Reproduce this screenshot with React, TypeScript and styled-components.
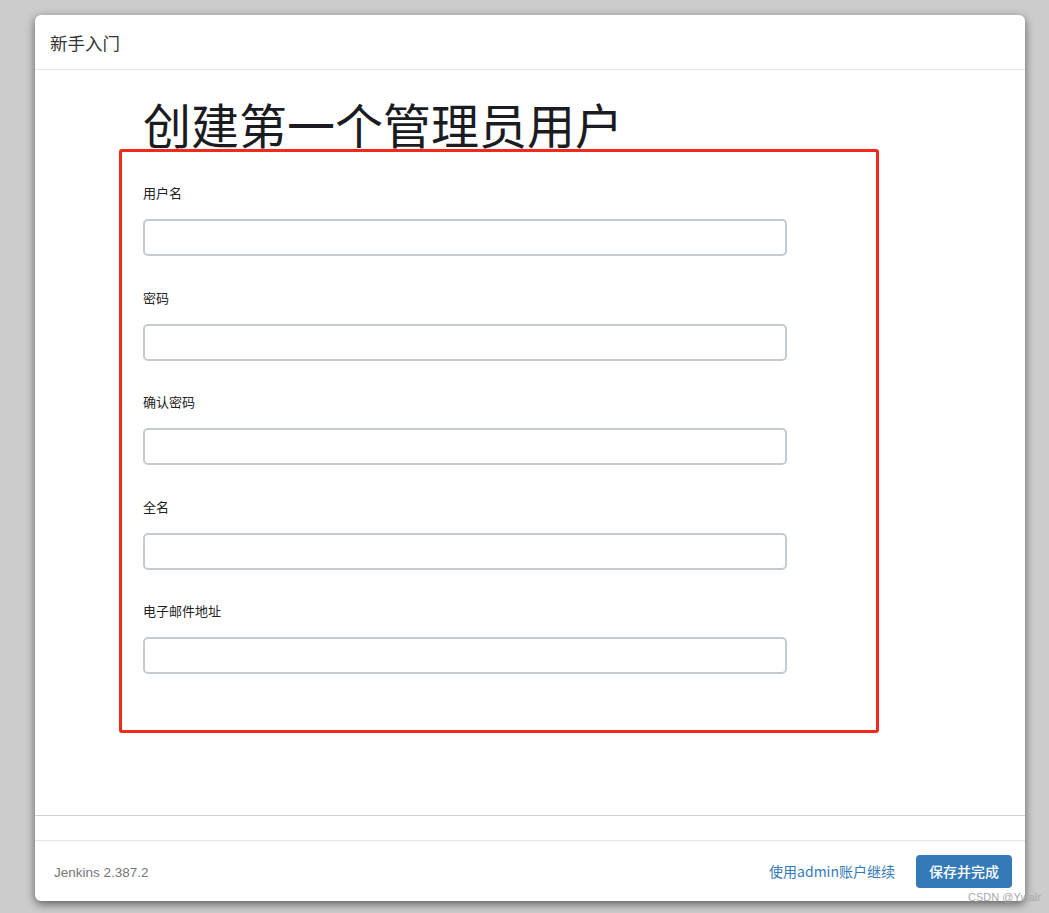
import React from "react";
import styled, { createGlobalStyle } from "styled-components";

const Global = createGlobalStyle`
  html, body { margin: 0; padding: 0; background: #cccccc; }
  body {
    font-family: "Liberation Sans", "Noto Sans CJK SC", sans-serif;
    color: #333;
  }
  * { box-sizing: border-box; }
`;

const Page = styled.div`
  position: relative;
  width: 1049px;
  height: 913px;
  padding: 15px 24px 12px 35px;
`;

const Modal = styled.div`
  width: 990px;
  height: 886px;
  background: #fff;
  border-radius: 6px;
  box-shadow: 0 3px 10px rgba(0, 0, 0, 0.55);
  display: flex;
  flex-direction: column;
  overflow: hidden;
`;

const Header = styled.div`
  height: 55px;
  flex-shrink: 0;
  border-bottom: 1px solid #e5e5e5;
  display: flex;
  align-items: center;
  padding: 0 15px;
  font-family: "Noto Sans CJK SC", sans-serif;
  font-size: 17.5px;
  color: #333;
`;

const Body = styled.div`
  flex: 1;
  border-bottom: 1px solid #d0d0d0;
  padding-top: 24px;
`;

const Title = styled.h1`
  margin: 0 0 0 108px;
  font-family: "Noto Sans CJK SC", sans-serif;
  font-weight: 400;
  font-size: 48px;
  line-height: 58px;
  color: #1b1b22;
`;

const Highlight = styled.div`
  position: relative;
  margin: -3px 0 0 84px;
  width: 760px;
  height: 584px;
  flex-shrink: 0;
  border: 3px solid #f22a1d;
  border-radius: 3px;
  padding: 32px 0 0 21px;
  display: flex;
  flex-direction: column;
`;

const Field = styled.div`
  display: flex;
  flex-direction: column;
  gap: 17px;
  margin-bottom: 32.5px;
`;

const Label = styled.label`
  font-family: "Noto Sans CJK SC", sans-serif;
  font-size: 13px;
  line-height: 18px;
  color: #222;
`;

const Input = styled.input`
  width: 644px;
  height: 37px;
  flex-shrink: 0;
  border: 2px solid #c3cbd0;
  border-radius: 5px;
  background: #fff;
  outline: none;
  padding: 0 10px;
  font-size: 14px;
`;

const Spacer = styled.div`
  height: 25px;
  flex-shrink: 0;
  border-bottom: 1px solid #e5e5e5;
`;

const Footer = styled.div`
  height: 60px;
  flex-shrink: 0;
  display: flex;
  align-items: center;
  padding: 0 13px 0 19px;
`;

const Version = styled.span`
  font-family: "Liberation Sans", sans-serif;
  font-size: 13.5px;
  color: #777;
  margin-top: 2px;
`;

const Actions = styled.div`
  margin-left: auto;
  display: flex;
  align-items: center;
  gap: 21px;
`;

const Link = styled.a`
  font-family: "Noto Sans CJK SC", sans-serif;
  font-size: 14px;
  color: #337ab7;
  text-decoration: none;
  cursor: pointer;
`;

const Button = styled.button`
  width: 96px;
  height: 33px;
  border: none;
  border-radius: 4px;
  background: #337ab7;
  color: #fff;
  font-family: "Noto Sans CJK SC", sans-serif;
  font-size: 14px;
  font-weight: 500;
  padding: 0;
  cursor: pointer;
`;

const Watermark = styled.div`
  position: absolute;
  left: 968px;
  top: 891px;
  font-family: "Liberation Sans", sans-serif;
  font-size: 11px;
  color: #a9a9a9;
  white-space: nowrap;
`;

const fields = ["用户名", "密码", "确认密码", "全名", "电子邮件地址"];

export default function App() {
  return (
    <>
      <Global />
      <Page>
        <Modal>
          <Header>新手入门</Header>
          <Body>
            <Title>创建第一个管理员用户</Title>
            <Highlight>
              {fields.map((f) => (
                <Field key={f}>
                  <Label>{f}</Label>
                  <Input type={f.includes("密码") ? "password" : "text"} />
                </Field>
              ))}
            </Highlight>
          </Body>
          <Spacer />
          <Footer>
            <Version>Jenkins 2.387.2</Version>
            <Actions>
              <Link>使用admin账户继续</Link>
              <Button>保存并完成</Button>
            </Actions>
          </Footer>
        </Modal>
        <Watermark>CSDN @Ywalr</Watermark>
      </Page>
    </>
  );
}
